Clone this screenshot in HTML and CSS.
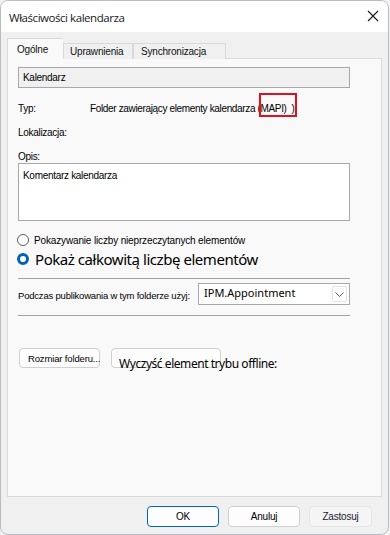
FILE: index.html
```html
<!DOCTYPE html>
<html lang="pl">
<head>
<meta charset="utf-8">
<link rel="stylesheet" href="styles.css">
</head>
<body>
<div class="window">
  <div class="titlebar">
    <span class="title">Właściwości kalendarza</span>
    <svg class="close" width="12" height="12" viewBox="0 0 12 12"><path d="M1 1L11 11M11 1L1 11" stroke="#1a1a1a" stroke-width="1.1" fill="none"/></svg>
  </div>
  <div class="body">
    <div class="tabs">
      <div class="tab active">Ogólne</div>
      <div class="tab">Uprawnienia</div>
      <div class="tab">Synchronizacja</div>
    </div>
    <div class="panel">
      <div class="name-field">Kalendarz</div>
      <div class="info-row typ-row">
        <span class="label">Typ:</span>
        <span class="value">Folder zawierający elementy kalendarza (MAPI)</span>
        <span class="stray">)</span>
        <span class="highlight"></span>
      </div>
      <div class="info-row loc-row"><span class="label">Lokalizacja:</span></div>
      <div class="info-row opis-row"><span class="label">Opis:</span></div>
      <div class="textarea">Komentarz kalendarza</div>
      <div class="radio-row small">
        <span class="radio"></span>
        <span>Pokazywanie liczby nieprzeczytanych elementów</span>
      </div>
      <div class="radio-row big">
        <span class="radio checked"></span>
        <span>Pokaż całkowitą liczbę elementów</span>
      </div>
      <div class="sep sep1"></div>
      <div class="publish-row">
        <span class="publish-label">Podczas publikowania w tym folderze użyj:</span>
        <div class="select">
          <span class="select-text">IPM.Appointment</span>
          <span class="select-btn"><svg width="9" height="5" viewBox="0 0 9 5"><path d="M0.5 0.5L4.5 4.5L8.5 0.5" stroke="#555" stroke-width="1" fill="none"/></svg></span>
        </div>
      </div>
      <div class="sep sep2"></div>
      <div class="btn-row">
        <div class="btn size-btn">Rozmiar folderu...</div>
        <div class="btn clear-btn"><span class="clear-text">Wyczyść element trybu offline:</span></div>
      </div>
    </div>
    <div class="footer">
      <div class="fbtn ok">OK</div>
      <div class="fbtn">Anuluj</div>
      <div class="fbtn disabled">Zastosuj</div>
    </div>
  </div>
</div>
</body>
</html>
```
FILE: styles.css
```css
html, body {
  margin: 0;
  padding: 0;
  background: #f3f3f3;
}
body {
  width: 390px;
  height: 535px;
  overflow: hidden;
  font-family: "Liberation Sans", Arial, sans-serif;
  color: #000;
}
.window {
  width: 389px;
  height: 535px;
  box-sizing: border-box;
  border: 1px solid #b9bcc2;
  border-radius: 8px;
  overflow: hidden;
  background: #f0f0f0;
  display: flex;
  flex-direction: column;
}
.titlebar {
  height: 31px;
  flex: none;
  background: #ffffff;
  display: flex;
  align-items: center;
  justify-content: space-between;
  padding: 0 9px 0 8px;
}
.title {
  font-family: "Open Sans", "Noto Sans", sans-serif;
  font-size: 11.5px;
  letter-spacing: -0.45px;
  color: #1a1a1a;
  margin-top: 1px;
}
.close {
  margin-top: -1px;
}
.body {
  flex: 1;
  display: flex;
  flex-direction: column;
  padding: 7px 7px 0 6px;
}
.tabs {
  display: flex;
  align-items: flex-end;
  height: 20px;
  position: relative;
  z-index: 2;
  margin-bottom: -1px;
}
.tab {
  height: 16px;
  box-sizing: border-box;
  border: 1px solid #d9d9d9;
  border-bottom: none;
  background: #f0f0f0;
  font-size: 10px;
  letter-spacing: -0.2px;
  display: flex;
  align-items: center;
  padding: 0 6px;
  color: #111;
}
.tab:nth-child(2) { width: 70px; padding-left: 6px; }
.tab:nth-child(3) { width: 93px; padding-left: 7px; }
.tab.active {
  height: 21px;
  width: 56px;
  background: #f9f9f9;
  padding-left: 9px;
  padding-top: 1px;
  border-right: none;
}
.panel {
  width: 375px;
  height: 439px;
  box-sizing: border-box;
  border: 1px solid #dadada;
  background: #f9f9f9;
  padding: 8px 0 0 10px;
  display: flex;
  flex-direction: column;
  font-size: 10px;
  letter-spacing: -0.3px;
}
.name-field {
  width: 332px;
  height: 21px;
  box-sizing: border-box;
  border: 1px solid #a8a8a8;
  background: #f0f0f0;
  display: flex;
  align-items: center;
  padding-left: 4px;
}
.info-row {
  height: 14px;
  display: flex;
  align-items: center;
  position: relative;
}
.typ-row { margin-top: 13px; }
.loc-row { margin-top: 10px; }
.opis-row { margin-top: 10px; }
.label { width: 72px; flex: none; }
.value { letter-spacing: -0.35px; }
.stray { margin-left: 5px; }
.highlight {
  position: absolute;
  left: 241px;
  top: -8px;
  width: 38px;
  height: 24px;
  box-sizing: border-box;
  border: 2px solid #e0101e;
}
.textarea {
  width: 332px;
  height: 58px;
  box-sizing: border-box;
  border: 1px solid #a8a8a8;
  background: #ffffff;
  padding: 6px 0 0 4px;
}
.radio-row {
  display: flex;
  align-items: center;
}
.radio {
  width: 12px;
  height: 12px;
  box-sizing: border-box;
  border: 1px solid #5c5c5c;
  border-radius: 50%;
  background: #fff;
  flex: none;
  margin-left: -1px;
}
.radio.checked {
  border: 3.5px solid #0063b8;
  background: #ffffff;
}
.radio-row.small {
  height: 14px;
  margin-top: 12px;
  font-size: 10px;
  letter-spacing: -0.15px;
  gap: 5px;
}
.radio-row.big {
  height: 18px;
  margin-top: 3px;
  font-family: "Noto Sans", "Open Sans", sans-serif;
  font-size: 15px;
  letter-spacing: -0.45px;
  gap: 6px;
}
.sep {
  width: 332px;
  height: 1px;
  background: #a0a0a0;
}
.sep1 { margin-top: 10px; }
.sep2 { margin-top: 10px; }
.publish-row {
  margin-top: 4px;
  display: flex;
  align-items: center;
  height: 22px;
}
.publish-label {
  width: 180px;
  flex: none;
  font-size: 9.5px;
  letter-spacing: -0.2px;
  margin-top: 3px;
}
.select {
  width: 152px;
  height: 22px;
  box-sizing: border-box;
  border: 1px solid #a8a8a8;
  background: #fff;
  display: flex;
  align-items: center;
  justify-content: space-between;
  padding: 0 2px 0 5px;
}
.select-text {
  font-family: "Noto Sans", "Open Sans", sans-serif;
  font-size: 11px;
  letter-spacing: 0;
  margin-top: -3px;
}
.select-btn {
  width: 15px;
  height: 16px;
  box-sizing: border-box;
  border: 1px solid #e3e3e3;
  border-radius: 2px;
  display: flex;
  align-items: center;
  justify-content: center;
}
.btn-row {
  margin-top: 32px;
  display: flex;
  gap: 11px;
  padding-left: 1px;
}
.btn {
  height: 20px;
  box-sizing: border-box;
  border: 1px solid #d0d0d0;
  border-radius: 4px;
  background: #fdfdfd;
  display: flex;
  align-items: center;
  white-space: nowrap;
}
.size-btn {
  width: 81px;
  padding-left: 8px;
  font-size: 9.5px;
  letter-spacing: -0.15px;
}
.clear-btn {
  width: 110px;
  padding-left: 7px;
}
.clear-text {
  font-family: "Noto Sans", "Open Sans", sans-serif;
  font-size: 12px;
  letter-spacing: -0.45px;
  margin-top: 10px;
}
.footer {
  display: flex;
  justify-content: flex-end;
  gap: 9px;
  padding: 9px 9px 0 0;
}
.fbtn {
  width: 72px;
  height: 21px;
  box-sizing: border-box;
  border: 1px solid #d0d0d0;
  border-radius: 4px;
  background: #fdfdfd;
  font-size: 10px;
  letter-spacing: -0.2px;
  display: flex;
  align-items: center;
  justify-content: center;
}
.fbtn.ok {
  border: 1px solid #0067c0;
}
.fbtn.disabled {
  width: 63px;
  background: #f5f5f5;
  border-color: #e5e5e5;
  color: #1b1b30;
}
```
